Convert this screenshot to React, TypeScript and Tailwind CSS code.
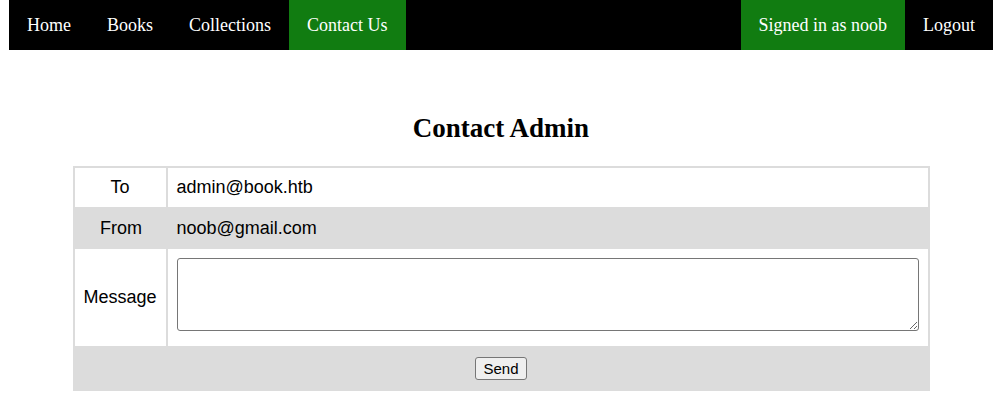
const navLeft = [
  { label: "Home", active: false },
  { label: "Books", active: false },
  { label: "Collections", active: false },
  { label: "Contact Us", active: true },
];

const App = () => {
  return (
    <div className="min-h-[413px] bg-white pl-[9px] pr-[7px] font-['Liberation_Serif',serif] text-black">
      <nav className="flex h-[50px] bg-black text-[18px] text-white">
        {navLeft.map((item) => (
          <a
            key={item.label}
            className={`flex items-center px-[18px] ${item.active ? "bg-[#117c11]" : ""}`}
          >
            {item.label}
          </a>
        ))}
        <div className="flex-1" />
        <a className="flex items-center bg-[#117c11] px-[18px]">Signed in as noob</a>
        <a className="flex items-center px-[18px]">Logout</a>
      </nav>

      <h2 className="mt-[62px] text-center text-[27px] font-bold leading-[32px]">
        Contact Admin
      </h2>

      <div className="mx-auto mt-[22px] w-[857px] border-2 border-b-0 border-[#dcdcdc] font-['Liberation_Sans',Arial,sans-serif] text-[18px]">
        <div className="flex h-[39px] bg-white">
          <div className="flex w-[93px] items-center justify-center border-r-2 border-[#dcdcdc]">To</div>
          <div className="flex flex-1 items-center pl-[9px]">admin@book.htb</div>
        </div>
        <div className="flex h-[42px] bg-[#dcdcdc]">
          <div className="flex w-[93px] items-center justify-center">From</div>
          <div className="flex flex-1 items-center pl-[9px]">noob@gmail.com</div>
        </div>
        <div className="flex h-[97px] bg-white">
          <div className="flex w-[93px] items-center justify-center border-r-2 border-[#dcdcdc]">Message</div>
          <div className="flex-1 px-[9px] pt-[9px]">
            <textarea className="block h-[73px] w-full rounded-[3px] border border-[#767676] bg-white" />
          </div>
        </div>
        <div className="flex h-[45px] items-center justify-center bg-[#dcdcdc]">
          <button className="h-[23px] rounded-[3px] border border-[#767676] bg-[#efefef] px-[7px] text-[15px] leading-none">
            Send
          </button>
        </div>
      </div>
    </div>
  );
};

export default App;
